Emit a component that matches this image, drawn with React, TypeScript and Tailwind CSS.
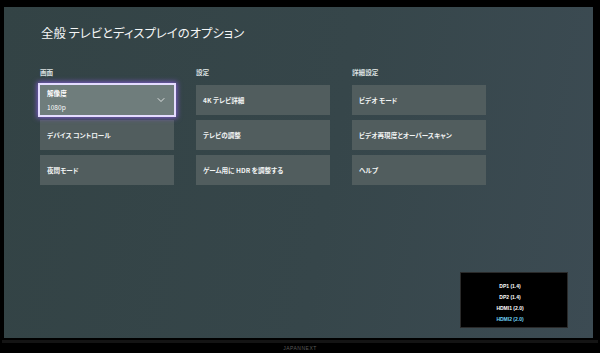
import { ChevronDown } from "lucide-react";

const jp = "font-['Noto_Sans_CJK_JP',sans-serif] [font-feature-settings:'palt']";

type Col = { label: string; items: string[] };

const columns: Col[] = [
  { label: "画面", items: ["解像度", "デバイス コントロール", "夜間モード"] },
  { label: "設定", items: ["4K テレビ詳細", "テレビの調整", "ゲーム用に HDR を調整する"] },
  { label: "詳細設定", items: ["ビデオ モード", "ビデオ再現度とオーバースキャン", "ヘルプ"] },
];

const inputs = [
  { name: "DP1 (1.4)", active: false },
  { name: "DP2 (1.4)", active: false },
  { name: "HDMI1 (2.0)", active: false },
  { name: "HDMI2 (2.0)", active: true },
];

function Card({ text, focused }: { text: string; focused?: boolean }) {
  if (focused) {
    return (
      <div className="relative h-[30px] bg-[#6f7d7c] shadow-[0_0_0_2px_#e4dcff,0_0_5px_3px_rgba(150,100,245,0.75)] flex items-center pl-[7px] pr-[7px]">
        <div className="flex flex-col gap-[8px] text-white">
          <span className="text-[6.6px] leading-none font-bold">{text}</span>
          <span className="text-[6.6px] leading-none">1080p</span>
        </div>
        <ChevronDown className="ml-auto text-white" size={12} strokeWidth={1.5} />
      </div>
    );
  }
  return (
    <div className="h-[30px] bg-[#515d5e] flex items-center pl-[7px] text-[6.6px] leading-none font-bold text-[#f2f4f4]">
      {text}
    </div>
  );
}

export default function App() {
  return (
    <div className={`w-[600px] h-[353px] bg-black flex flex-col overflow-hidden ${jp}`}>
      <div className="pt-[7px] pl-[4px] pr-[7px]">
        <div className="h-[331px] flex flex-col bg-[linear-gradient(100deg,#334345_0%,#36464a_55%,#3c4b53_100%)]">
          <h1 className="pl-[37px] pt-[20px] text-[12.4px] leading-none text-[#f4f6f6]">
            全般 テレビとディスプレイのオプション
          </h1>

          <div className="pl-[36px] mt-[30px] flex gap-[22px]">
            {columns.map((col, ci) => (
              <div key={col.label} className="w-[134px] flex flex-col">
                <div className="h-[16px] text-[6.6px] leading-none font-bold text-[#dde2e2]">
                  {col.label}
                </div>
                <div className="flex flex-col gap-[5px]">
                  {col.items.map((it, ii) => (
                    <Card key={it} text={it} focused={ci === 0 && ii === 0} />
                  ))}
                </div>
              </div>
            ))}
          </div>

          <div className="mt-auto mb-[10px] mr-[25px] self-end w-[108px] h-[56px] bg-black border border-[#2a2a2a] flex flex-col items-center pt-[11px] pr-[8px] gap-[6px] font-['Liberation_Sans',sans-serif]">
            {inputs.map((inp) => (
              <span
                key={inp.name}
                className={`text-[5px] leading-[5px] font-bold ${inp.active ? "text-[#6fd4f6]" : "text-white"}`}
              >
                {inp.name}
              </span>
            ))}
          </div>
        </div>
      </div>
      <div className="h-[3px] mt-[2px] mx-[2px] bg-[#141414]" />
      <div className="flex-1 flex items-start justify-center pt-[3px]">
        <span className="text-[5px] leading-none tracking-[0.5px] text-[#5a5a5a] font-['Liberation_Sans',sans-serif]">
          JAPANNEXT
        </span>
      </div>
    </div>
  );
}
